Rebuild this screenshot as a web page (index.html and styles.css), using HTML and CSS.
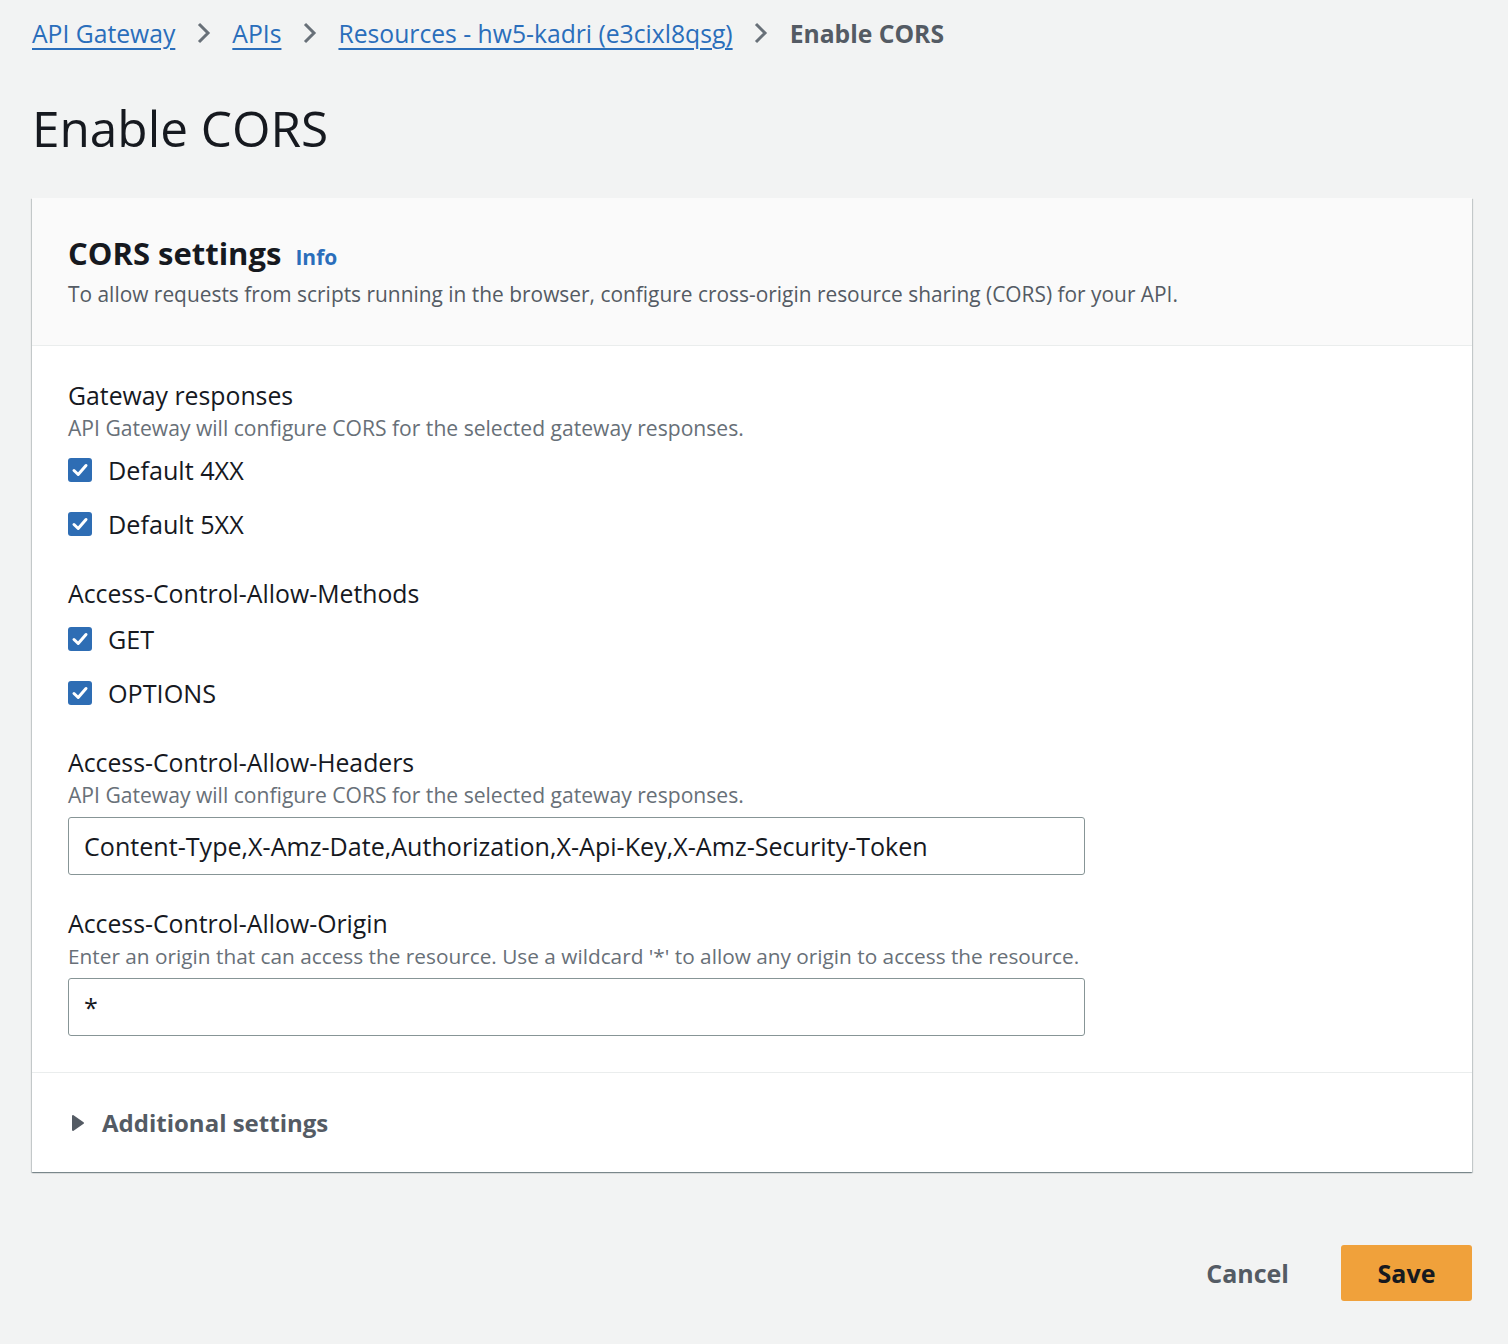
FILE: index.html
```html
<!DOCTYPE html>
<html>
<head>
<meta charset="utf-8">
<link rel="stylesheet" href="styles.css">
</head>
<body>
<div class="page">
  <nav class="crumbs">
    <a class="crumb-link" href="#">API Gateway</a>
    <svg class="chev" viewBox="0 0 16 24" width="16" height="24"><path d="M3 3 L12 12 L3 21" fill="none" stroke="#687078" stroke-width="3"/></svg>
    <a class="crumb-link" href="#">APIs</a>
    <svg class="chev" viewBox="0 0 16 24" width="16" height="24"><path d="M3 3 L12 12 L3 21" fill="none" stroke="#687078" stroke-width="3"/></svg>
    <a class="crumb-link" href="#">Resources - hw5-kadri (e3cixl8qsg)</a>
    <svg class="chev" viewBox="0 0 16 24" width="16" height="24"><path d="M3 3 L12 12 L3 21" fill="none" stroke="#687078" stroke-width="3"/></svg>
    <span class="crumb-current">Enable CORS</span>
  </nav>

  <h1 class="page-title">Enable CORS</h1>

  <section class="card">
    <header class="card-head">
      <div class="card-title-row">
        <h2 class="card-title">CORS settings</h2>
        <a class="info" href="#">Info</a>
      </div>
      <p class="card-desc">To allow requests from scripts running in the browser, configure cross-origin resource sharing (CORS) for your API.</p>
    </header>

    <div class="card-body">
      <div class="field">
        <div class="label">Gateway responses</div>
        <div class="desc">API Gateway will configure CORS for the selected gateway responses.</div>
        <div class="checks">
          <label class="check"><span class="box"><svg viewBox="0 0 24 24" width="24" height="24"><path d="M6 12.5 L10.2 16.5 L18 7.5" fill="none" stroke="#fff" stroke-width="3" stroke-linecap="round" stroke-linejoin="round"/></svg></span>Default 4XX</label>
          <label class="check"><span class="box"><svg viewBox="0 0 24 24" width="24" height="24"><path d="M6 12.5 L10.2 16.5 L18 7.5" fill="none" stroke="#fff" stroke-width="3" stroke-linecap="round" stroke-linejoin="round"/></svg></span>Default 5XX</label>
        </div>
      </div>

      <div class="field">
        <div class="label">Access-Control-Allow-Methods</div>
        <div class="checks checks-tight">
          <label class="check"><span class="box"><svg viewBox="0 0 24 24" width="24" height="24"><path d="M6 12.5 L10.2 16.5 L18 7.5" fill="none" stroke="#fff" stroke-width="3" stroke-linecap="round" stroke-linejoin="round"/></svg></span>GET</label>
          <label class="check"><span class="box"><svg viewBox="0 0 24 24" width="24" height="24"><path d="M6 12.5 L10.2 16.5 L18 7.5" fill="none" stroke="#fff" stroke-width="3" stroke-linecap="round" stroke-linejoin="round"/></svg></span>OPTIONS</label>
        </div>
      </div>

      <div class="field field-input">
        <div class="label">Access-Control-Allow-Headers</div>
        <div class="desc">API Gateway will configure CORS for the selected gateway responses.</div>
        <div class="input">Content-Type,X-Amz-Date,Authorization,X-Api-Key,X-Amz-Security-Token</div>
      </div>

      <div class="field">
        <div class="label">Access-Control-Allow-Origin</div>
        <div class="desc desc-narrow">Enter an origin that can access the resource. Use a wildcard '*' to allow any origin to access the resource.</div>
        <div class="input">*</div>
      </div>
    </div>

    <div class="card-foot">
      <svg class="caret" viewBox="0 0 16 20" width="16" height="20"><path d="M3 3 L13 10 L3 17 Z" fill="#545b64" stroke="#545b64" stroke-width="2" stroke-linejoin="round"/></svg>
      <span class="foot-title">Additional settings</span>
    </div>
  </section>

  <div class="actions">
    <button class="btn-link">Cancel</button>
    <button class="btn-primary">Save</button>
  </div>
</div>
</body>
</html>
```

FILE: styles.css
```css
* { box-sizing: border-box; }
html, body { margin: 0; padding: 0; }
body {
  background: #f2f3f3;
  font-family: "Open Sans", "Noto Sans", sans-serif;
  color: #16191f;
  width: 1508px;
  height: 1344px;
  overflow: hidden;
}
.page { padding: 0 36px 0 32px; }

.crumbs {
  display: flex;
  align-items: center;
  height: 66px;
  font-size: 24.7px;
}
.crumb-link {
  color: #2a6ebb;
  text-decoration: underline;
  text-decoration-thickness: 2px;
  text-underline-offset: 5px;
}
.chev { margin: 0 20.5px; }
.crumb-current { color: #545b64; font-weight: 700; }

.page-title {
  margin: 28px 0 0;
  font-size: 49.5px;
  font-weight: 400;
  line-height: 68px;
  height: 104px;
}

.card {
  background: #fff;
  box-shadow: 0 1px 1px 0 rgba(0,28,36,.3), 1px 1px 1px 0 rgba(0,28,36,.15), -1px 1px 1px 0 rgba(0,28,36,.15);
}
.card-head {
  background: #fafafa;
  border-bottom: 1px solid #eaeded;
  padding: 31px 36px 34px;
  height: 148px;
}
.card-title-row { display: flex; align-items: baseline; gap: 14px; }
.card-title { margin: 0; font-size: 31px; font-weight: 700; line-height: 48px; }
.info { color: #2a6ebb; font-weight: 700; font-size: 21px; text-decoration: none; }
.card-desc { margin: 0; color: #545b64; font-size: 20.9px; line-height: 34px; }

.card-body { padding: 32px 36px 36px; border-bottom: 1px solid #eaeded; }
.field { margin-bottom: 33px; }
.field-input { margin-bottom: 31px; }
.field:last-child { margin-bottom: 0; }
.label { font-size: 24.8px; line-height: 34px; }
.desc { font-size: 21.1px; line-height: 32px; color: #687078; }
.desc-narrow { font-size: 20.8px; }
.checks { display: flex; flex-direction: column; gap: 16px; padding-top: 7px; }
.checks-tight { padding-top: 10px; }
.check { display: flex; align-items: center; gap: 16px; font-size: 25.2px; line-height: 38px; }
.box {
  width: 24px; height: 24px;
  border-radius: 3px;
  background: #2e6db4;
  display: flex;
}
.input {
  margin-top: 6px;
  width: 1017px;
  height: 58px;
  border: 1px solid #879596;
  border-radius: 3px;
  background: #fff;
  padding: 0 15px;
  display: flex;
  align-items: center;
  font-size: 25.1px;
}

.card-foot {
  height: 99px;
  display: flex;
  align-items: center;
  padding: 0 38px;
  gap: 16px;
}
.foot-title { font-size: 24px; font-weight: 700; color: #545b64; }

.actions {
  display: flex;
  justify-content: flex-end;
  align-items: center;
  margin-top: 73px;
  gap: 32px;
}
.btn-link {
  background: none; border: none;
  font-family: inherit;
  font-size: 25px; font-weight: 700; color: #545b64;
  padding: 0 20px;
}
.btn-primary {
  font-family: inherit;
  width: 131px; height: 56px;
  background: #f0a13b;
  border: none;
  border-radius: 3px;
  font-size: 25px; font-weight: 700; color: #16191f;
}
```
